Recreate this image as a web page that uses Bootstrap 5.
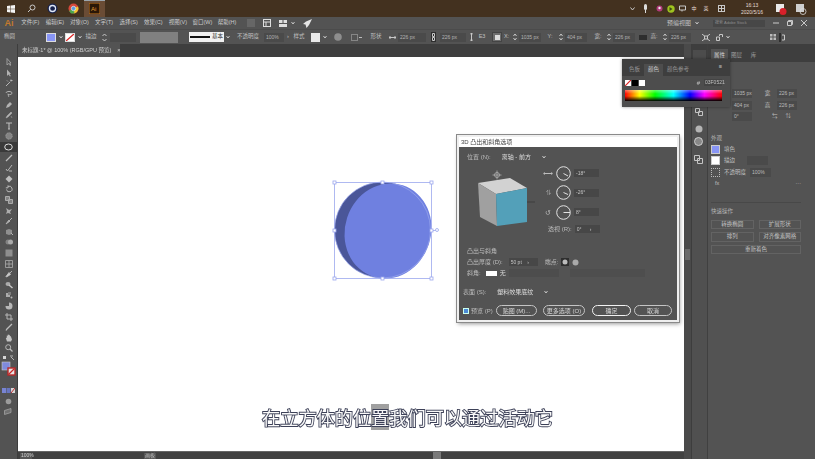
<!DOCTYPE html>
<html lang="zh-CN">
<head>
<meta charset="UTF-8">
<title>Illustrator 3D</title>
<link href="https://cdn.jsdelivr.net/npm/bootstrap@5.3.2/dist/css/bootstrap.min.css" rel="stylesheet">
<style>
html, body { margin: 0; background: #535353; overflow: hidden; }
body { font-family: "Liberation Sans", "Noto Sans CJK SC", sans-serif; font-size: 6px; line-height: 1; color: #c0c0c0; }
.app-root { width: 815px; height: 459px; position: relative; overflow: hidden; filter: blur(.4px); }
svg { display: block; flex: none; }
.taskbar { height: 17px; background: #43311f; }
.task-btn { width: 21px; height: 17px; }
.task-on { background: #6a4c35; box-shadow: inset 0 1px 0 #9aa5ae; }
.clock-box { width: 30px; font-size: 5px; line-height: 7px; color: #e3ded8; text-align: center; }
.menubar { height: 12px; background: #535353; }
.ai-mark { width: 18px; color: #c47a2c; font-size: 9px; font-weight: 700; text-align: center; }
.menu-item { width: 24.6px; text-align: center; color: #cbcbcb; font-size: 5.5px; white-space: nowrap; }
.search-box { width: 52px; height: 7px; background: #474747; margin-left: 14px; margin-right: 8px; color: #8d8d8d; font-size: 4px; padding: 1px 2px; }
.optbar { height: 15px; background: #535353; border-top: 1px solid #4b4b4b; }
.cell { flex: none; display: flex; align-items: center; justify-content: center; height: 13px; white-space: nowrap; font-size: 5.5px; }
.c4{width:4px}.c5{width:5px}.c6{width:6px}.c8{width:8px}.c9{width:9px}.c10{width:10px}.c11{width:11px}.c12{width:12px}.c14{width:14px}.c16{width:16px}.c18{width:18px}.c20{width:20px}.c21{width:21px}.c22{width:22px}.c26{width:26px}.c28{width:28px}.c32{width:32px}.c35{width:35px}.c38{width:38px}.c46{width:46px}
.c-fill { height: 9px; background: #8895f5; border: 1px solid #ddd; }
.c-stroke { height: 9px; background: #fff; border: 1px solid #ddd; }
.c-input { height: 9px; background: #4a4a4a; color: #b4b4b4; font-size: 5px; justify-content: flex-start; padding-left: 2px; }
.c-gray { height: 11px; background: #808080; }
.c-stk { height: 10px; background: #f0f0f0; color: #333; gap: 2px; }
.c-white { height: 9px; background: #e8e8e8; }
.c-sel { height: 10px; background: #6e6e6e; border: 1px solid #444; }
.chev { width: 4px; height: 4px; }
.work { height: 415px; }
.tool-col { width: 18px; background: #535353; border-right: 1px solid #3d3d3d; padding-top: 13px; }
.tool-ic { width: 17px; height: 10.6px; display: flex; align-items: center; justify-content: center; opacity: .85; }
.tool-ic.on { background: #3a3a3a; opacity: 1; }
.doc-col { width: 666px; }
.doc-tabs { height: 13px; background: #3e3e3e; }
.doc-tab { width: 102px; height: 13px; background: #535353; font-size: 5.5px; padding-left: 4px; gap: 6px; color: #d0d0d0; white-space: nowrap; }
.art-canvas { flex: 1 1 auto; background: #fff; position: relative; }
.art-svg { position: absolute; left: 0; top: 0; }
.status-row { height: 8px; background: #414141; border-top: 1px solid #666; color: #bbb; font-size: 5px; padding-left: 2px; }
.stat-zoom { width: 12px; height: 6px; background: #565656; padding: .5px 1px; color: #d0d0d0; }
.stat-mid { margin-left: 112px; width: 12px; height: 6px; background: #565656; padding: .5px 1px; }
.stat-thumb { margin-left: 277px; width: 8px; height: 7px; background: #7a7a7a; }
.scroll-col { width: 8px; background: #4a4a4a; padding: 205px 1px 0; border-right: 1px solid #3d3d3d; }
.scroll-thumb { height: 11px; background: #6a6a6a; }
.dock-col { width: 16px; background: #505050; border-right: 1px solid #404040; }
.dock-head { height: 18px; background: #3e3e3e; padding-top: 6px; margin-bottom: 46px; }
.dock-box { height: 12px; margin: 0 1px; background: #4c4c4c; }
.dock-ic { padding-right: 2px; }
.dh-17 { height: 17px; }
.dh-12 { height: 12px; }
.dh-18 { height: 18px; }
.prop-col { flex: 1 1 auto; background: #535353; }
.prop-tabs { height: 18px; background: #3e3e3e; padding-left: 3px; }
.prop-tab { width: 17px; height: 13px; font-size: 5.5px; display: flex; align-items: center; justify-content: center; color: #a0a0a0; }
.prop-tab.act { background: #535353; color: #d6d6d6; }
.prop-body { padding: 26px 14px 0 3px; font-size: 5.5px; }
.p-row { height: 11.5px; gap: 4px; white-space: nowrap; }
.p-field { height: 9px; background: #4a4a4a; color: #bcbcbc; font-size: 5px; display: flex; align-items: center; padding-left: 2px; white-space: nowrap; flex: none; }
.pf-20 { width: 20px; margin-left: 21px; }
.p-lab { width: 15px; text-align: center; margin: 0 -2px; }
.pf-op { margin-left: 0; }
.pf-st { margin-left: 8px; }
.p-head { margin-top: 12px; height: 9px; color: #b4b4b4; display: flex; align-items: center; }
.p-sw { width: 9px; height: 9px; border: 1px solid #ccc; flex: none; }
.sw-fill { background: #8895f5; }
.sw-none { background: #fff; }
.sw-dash { border: 1px dotted #bbb; }
.p-line { border-top: 1px solid #484848; margin: 12px 0 5px; }
.p-btn { height: 9.5px; border: 1px solid #636363; color: #c4c4c4; font-size: 5.5px; display: flex; align-items: center; justify-content: center; flex: 1 1 0; white-space: nowrap; }
.p-btns { gap: 5px; margin-top: 3px; }
.float-color { position: absolute; left: 622px; top: 59px; width: 108px; height: 48px; background: #4d4d4d; box-shadow: 0 0 3px rgba(0,0,0,.4); }
.fc-tabs { height: 17px; background: #3e3e3e; padding: 5px 0 0 3px; font-size: 5.5px; }
.fc-tab { height: 12px; padding: 0 4px; display: flex; align-items: center; color: #969696; white-space: nowrap; }
.fc-tab.act { background: #4d4d4d; color: #cfcfcf; }
.fc-row { height: 11px; padding: 0 8px 0 3px; margin-top: 1px; }
.fc-sq { width: 6px; height: 6px; margin-right: 1px; }
.sq-k { background: #000; }
.sq-w { background: #fff; }
.fc-hex { width: 18px; height: 7px; background: #444; font-size: 5px; padding: 1px; }
.fc-spec { height: 11px; margin: 2px 8px 0 3px; background: linear-gradient(180deg, rgba(255,255,255,.4), rgba(255,255,255,0) 35%, rgba(0,0,0,0) 55%, #000), linear-gradient(90deg, #f00, #ff0 15%, #0f0 31%, #0ff 50%, #00f 67%, #f0f 82%, #f00); }
.dlg-3d { position: absolute; left: 439px; top: 78px; width: 222px; height: 187px; background: #535353; border: 2px solid #efefef; box-shadow: 0 0 0 1px #8a8a8a, 1px 2px 4px rgba(0,0,0,.4); color: #bcbcbc; font-size: 6px; }
.dlg-title { height: 10px; background: #fff; color: #444; padding-left: 2px; font-size: 6px; }
.dlg-body { padding: 5px 0 0 4px; }
.d-row { height: 10px; white-space: nowrap; gap: 3px; }
.d-strong { color: #dcdcdc; }
.cube-area { width: 80px; height: 64px; }
.dial-col { padding-top: 1.5px; }
.dial-row { height: 19.5px; gap: 3px; }
.d-ic { width: 10px; text-align: center; font-size: 7px; }
.d-field { width: 25px; height: 8px; background: #474747; font-size: 5px; padding: 1.5px 2px; white-space: nowrap; color: #c4c4c4; flex: none; }
.d-thick { width: 29px; margin-left: 3px; }
.d-persp { margin-left: 85px; margin-top: -2px; }
.d-bevel { margin-top: 12px; }
.d-r1 { margin-top: 1px; }
.d-sec { margin-top: 9px; }
.d-foot { margin-top: 8px; }
.d-chk { width: 6px; height: 6px; background: #4b8ad6; border: 1px solid #cfe; flex: none; }
.d-chk-lab { width: 27px; padding-left: 2px; white-space: nowrap; }
.d-btn { height: 11px; border: 1px solid #c4c4c4; border-radius: 6px; display: flex; align-items: center; justify-content: center; font-size: 6px; color: #d6d6d6; flex: none; white-space: nowrap; }
.b-map { width: 41px; }
.b-more { width: 42px; margin-left: 6px; }
.b-ok { width: 39px; border-color: #f2f2f2; border-width: 1.5px; margin-left: 7px; }
.b-no { width: 38px; margin-left: 3px; }
.d-swatch { width: 11px; height: 5px; background: #fff; margin-left: 2px; }
.d-wide { width: 50px; height: 8px; background: #4d4d4d; margin-left: 0; }
.d-off { width: 75px; height: 8px; background: #4e4e4e; margin-left: 8px; color: #6c6c6c; }
.d-off-btns { margin-left: auto; }
.sub-line { position: absolute; left: 262px; top: 407px; width: 292px; font-family: "Noto Sans CJK SC", sans-serif; font-size: 18.2px; line-height: 21px; white-space: nowrap; color: #f9f9f9; -webkit-text-stroke: 1.8px #3d4158; paint-order: stroke fill; }
.sub-hi { background: #a0a0a0; }
.tic { fill: none; stroke: #c8c8c8; stroke-width: 1; }
</style>
</head>
<body>
<div class="app-root d-flex flex-column">

  <div class="taskbar d-flex align-items-center flex-shrink-0">
    <div class="task-btn d-flex align-items-center justify-content-center">
      <svg width="8" height="8" viewBox="0 0 8 8"><path fill="#f4f4f4" d="M0 1l3.500-.5V3.700H0zM4 .4L8 0v3.700H4zM0 4.200h3.500v3.300L0 7zM4 4.200h4V8l-4-.5z"/></svg>
    </div>
    <div class="task-btn d-flex align-items-center justify-content-center">
      <svg width="9" height="9" viewBox="0 0 9 9"><circle cx="5.500" cy="3.500" r="2.500" class="tic"/><path d="M3.700 5.300L1 8" class="tic"/></svg>
    </div>
    <div class="task-btn d-flex align-items-center justify-content-center">
      <svg width="11" height="11" viewBox="0 0 11 11"><circle cx="5.500" cy="5.500" r="5" fill="#17224d"/><circle cx="5.500" cy="5.500" r="3" fill="none" stroke="#dfe6f5" stroke-width="1.400"/><circle cx="6.500" cy="5.500" r="1.200" fill="#17224d"/></svg>
    </div>
    <div class="task-btn d-flex align-items-center justify-content-center">
      <svg width="11" height="11" viewBox="0 0 11 11"><circle cx="5.500" cy="5.500" r="5" fill="#d6483b"/><path d="M5.500 5.500L1 8 3 10.500 5.500 10.500 8 10z" fill="#4da84e"/><path d="M5.500 5.500L10 3.500 10.500 6 9 9 6.500 10.500z" fill="#f2c531"/><circle cx="5.500" cy="5.500" r="2.200" fill="#5a9bdc" stroke="#eee" stroke-width=".7"/></svg>
    </div>
    <div class="task-btn task-on d-flex align-items-center justify-content-center">
      <svg width="11" height="11" viewBox="0 0 11 11"><rect width="11" height="11" fill="#2a1707" stroke="#c87a20" stroke-width="1"/><text x="2" y="8" font-size="6" fill="#e39a2f" font-family="Liberation Sans">Ai</text></svg>
    </div>
    <div class="d-flex align-items-center ms-auto gap-1 pe-2">
      <svg width="5" height="4" viewBox="0 0 5 4"><path d="M.5.5l2 2.500 2-2.500" class="tic"/></svg>
      <svg class="ms-1" width="5" height="9" viewBox="0 0 5 9"><rect x="1" width="3" height="6" rx="1.500" fill="#ddd"/><path d="M2.500 6v3" stroke="#ddd"/></svg>
      <svg class="ms-1" width="7" height="7" viewBox="0 0 7 7"><circle cx="3.500" cy="3.500" r="3" fill="#b03a7a"/><circle cx="3.500" cy="3" r="1.200" fill="#eee"/></svg>
      <svg width="8" height="8" viewBox="0 0 8 8"><circle cx="4" cy="4" r="3.700" fill="#9fc31f"/><path d="M2.500 2l3 2-3 2z" fill="#3d4a12"/></svg>
      <svg width="7" height="7" viewBox="0 0 7 7"><path d="M.5 1h6v4h-6zM3 5v1.500" class="tic"/></svg>
      <span class="clock-box c8">中</span>
      <span class="clock-box c8">英</span>
      <svg class="ms-1" width="7" height="7" viewBox="0 0 7 7"><rect x=".5" y=".5" width="6" height="6" class="tic"/><path d="M.5 3.500h6M3.500.5v6" class="tic"/></svg>
      <div class="clock-box ms-2">16:13<br>2020/5/16</div>
      <svg class="ms-1" width="12" height="12" viewBox="0 0 12 12"><rect x="1" y="1" width="8" height="8" fill="#e9e9e9"/><circle cx="8" cy="8.500" r="3.500" fill="#d8202a"/></svg>
      <svg class="ms-1" width="12" height="12" viewBox="0 0 12 12"><rect x="1" y="1" width="8" height="8" fill="#cfcfcf"/><circle cx="8" cy="8.500" r="3" fill="none" stroke="#ddd" stroke-width=".8"/></svg>
    </div>
  </div>

  <div class="menubar d-flex align-items-center flex-shrink-0">
    <span class="ai-mark">Ai</span>
    <span class="menu-item">文件(F)</span>
    <span class="menu-item">编辑(E)</span>
    <span class="menu-item">对象(O)</span>
    <span class="menu-item">文字(T)</span>
    <span class="menu-item">选择(S)</span>
    <span class="menu-item">效果(C)</span>
    <span class="menu-item">视图(V)</span>
    <span class="menu-item">窗口(W)</span>
    <span class="menu-item">帮助(H)</span>
    <svg class="ms-2" width="8" height="8" viewBox="0 0 8 8"><rect width="8" height="8" fill="#666"/></svg>
    <svg class="ms-2" width="8" height="8" viewBox="0 0 8 8"><rect x=".5" y=".5" width="7" height="7" fill="none" stroke="#ddd"/><path d="M.5 3h7M3 3v4.500" stroke="#ddd"/></svg>
    <svg class="ms-2" width="8" height="7" viewBox="0 0 8 7"><path d="M0 0h3.500v3H0zM4.500 0H8v3H4.500zM0 4h8v3H0z" fill="#ddd"/></svg>
    <svg class="ms-1" width="4" height="4" viewBox="0 0 4 4"><path d="M.5 1l1.500 2 1.500-2" class="tic"/></svg>
    <svg class="ms-2" width="9" height="9" viewBox="0 0 9 9"><path d="M9 0L3 2.500 0 5l2.500.5L3.500 9 6 6z" fill="#e4e4e4"/></svg>
    <span class="ms-auto">预编视图</span>
    <svg class="ms-1" width="4" height="4" viewBox="0 0 4 4"><path d="M.5 1l1.500 2 1.500-2" class="tic"/></svg>
    <div class="search-box d-flex align-items-center">搜索 Adobe Stock</div>
    <svg width="6" height="2" viewBox="0 0 6 2"><path d="M0 1h6" stroke="#ccc"/></svg>
    <svg class="ms-2" width="6" height="6" viewBox="0 0 6 6"><path d="M.5 1.500h4v4h-4zM1.500 1.500V.5h4v4h-1" class="tic"/></svg>
    <svg class="ms-2 me-2" width="6" height="6" viewBox="0 0 6 6"><path d="M0 0l6 6M6 0L0 6" class="tic"/></svg>
  </div>

  <div class="optbar d-flex align-items-center flex-shrink-0">
    <div class="cell c46 justify-content-start ps-1">椭圆</div>
    <div class="cell c10 c-fill"></div>
    <div class="cell c9"><svg class="chev" viewBox="0 0 4 4"><path d="M.5 1l1.500 2 1.500-2" class="tic"/></svg></div>
    <div class="cell c10 c-stroke"><svg width="8" height="7" viewBox="0 0 8 7"><path d="M0 7L8 0" stroke="#d22" stroke-width="1.300"/></svg></div>
    <div class="cell c9"><svg class="chev" viewBox="0 0 4 4"><path d="M.5 1l1.500 2 1.500-2" class="tic"/></svg></div>
    <div class="cell c14">描边</div>
    <div class="cell c12"><svg width="5" height="9" viewBox="0 0 5 9"><path d="M.5 3l2-2 2 2M.5 6l2 2 2-2" class="tic"/></svg></div>
    <div class="cell c26 c-input"></div>
    <div class="cell c4"></div>
    <div class="cell c38 c-gray"></div>
    <div class="cell c11"></div>
    <div class="cell c35 c-stk"><svg width="20" height="2" viewBox="0 0 20 2"><rect width="20" height="2" fill="#111"/></svg>基本</div>
    <div class="cell c8"><svg class="chev" viewBox="0 0 4 4"><path d="M.5 1l1.500 2 1.500-2" class="tic"/></svg></div>
    <div class="cell c32">不透明度</div>
    <div class="cell c20 c-input">100%</div>
    <div class="cell c8">›</div>
    <div class="cell c14">样式</div>
    <div class="cell c5"></div>
    <div class="cell c9 c-white"></div>
    <div class="cell c10"><svg class="chev" viewBox="0 0 4 4"><path d="M.5 1l1.500 2 1.500-2" class="tic"/></svg></div>
    <div class="cell c16"><svg width="8" height="8" viewBox="0 0 8 8"><circle cx="4" cy="4" r="3.800" fill="#8e8e8e"/></svg></div>
    <div class="cell c20"><svg width="11" height="7" viewBox="0 0 11 7"><path d="M.5.5h6v6h-6z" fill="none" stroke="#bbb" stroke-dasharray="1 1"/><path d="M8 3.500h3" stroke="#bbb"/></svg></div>
    <div class="cell c20">形状</div>
    <div class="cell c12"><svg width="7" height="5" viewBox="0 0 7 5"><path d="M0 2.500h7M1.500 1L0 2.500 1.500 4M5.500 1L7 2.500 5.500 4" class="tic"/></svg></div>
    <div class="cell c28 c-input">226 px</div>
    <div class="cell c14"><svg width="5" height="10" viewBox="0 0 5 10"><rect width="5" height="10" fill="#2e2e2e"/><path d="M1.500 1.500h2v3h-2zM1.500 5.500h2v3h-2z" class="tic"/></svg></div>
    <div class="cell c26 c-input">226 px</div>
    <div class="cell c10"><svg width="3" height="8" viewBox="0 0 3 8"><path d="M1.500 0v8M0 1.500L1.500 0 3 1.500M0 6.500L1.500 8 3 6.500" class="tic"/></svg></div>
    <div class="cell c12">E3</div>
    <div class="cell c4"></div>
    <div class="cell c10 c-sel"><svg width="5" height="5" viewBox="0 0 5 5"><rect width="5" height="5" fill="#ddd"/></svg></div>
    <div class="cell c9">X:</div>
    <div class="cell c8"><svg width="4" height="8" viewBox="0 0 4 8"><path d="M.5 3l1.500-2 1.500 2M.5 5l1.500 2 1.500-2" class="tic"/></svg></div>
    <div class="cell c22 c-input">1035 px</div>
    <div class="cell c6"></div>
    <div class="cell c6">Y:</div>
    <div class="cell c4"></div>
    <div class="cell c8"><svg width="4" height="8" viewBox="0 0 4 8"><path d="M.5 3l1.500-2 1.500 2M.5 5l1.500 2 1.500-2" class="tic"/></svg></div>
    <div class="cell c22 c-input">404 px</div>
    <div class="cell c8"></div>
    <div class="cell c6">宽:</div>
    <div class="cell c4"></div>
    <div class="cell c8"><svg width="4" height="8" viewBox="0 0 4 8"><path d="M.5 3l1.500-2 1.500 2M.5 5l1.500 2 1.500-2" class="tic"/></svg></div>
    <div class="cell c22 c-input">226 px</div>
    <div class="cell c4"></div>
    <div class="cell c8"><svg width="8" height="5" viewBox="0 0 8 5"><rect width="8" height="5" fill="#2e2e2e"/></svg></div>
    <div class="cell c4"></div>
    <div class="cell c6">高:</div>
    <div class="cell c4"></div>
    <div class="cell c8"><svg width="4" height="8" viewBox="0 0 4 8"><path d="M.5 3l1.500-2 1.500 2M.5 5l1.500 2 1.500-2" class="tic"/></svg></div>
    <div class="cell c22 c-input">226 px</div>
    <div class="cell c8"></div>
    <div class="cell c14"><svg width="8" height="7" viewBox="0 0 8 7"><path d="M0 0l2.500 2M8 0L5.500 2M0 7l2.500-2M8 7L5.500 5" class="tic"/><rect x="2.500" y="2" width="3" height="3" class="tic"/></svg></div>
    <div class="cell c12"><svg width="7" height="7" viewBox="0 0 7 7"><path d="M.5 3h3v3.500h-3zM3.500 2V.5h3V3" class="tic"/></svg></div>
    <div class="cell c6"><svg class="chev" viewBox="0 0 4 4"><path d="M.5 1l1.500 2 1.500-2" class="tic"/></svg></div>
    <div class="cell c38"></div>
    <div class="cell c8"><svg width="6" height="6" viewBox="0 0 6 6"><path d="M0 0h2.500v2.500H0zM3.500 0H6v2.500H3.500zM0 3.500h2.500V6H0zM3.500 3.500H6V6H3.500z" fill="#bbb"/></svg></div>
    <div class="cell c10"><svg width="6" height="9" viewBox="0 0 6 9"><rect width="2" height="9" fill="#2e2e2e"/><path d="M3 2h2.500v5H3" class="tic"/></svg></div>
  </div>

  <div class="work d-flex flex-grow-1">
    <div class="tool-col flex-shrink-0">
      <div class="tool-ic"><svg width="8" height="8" viewBox="0 0 8 8"><path d="M2 .5v6.500l1.500-1.500L5 7.500l.8-.5-1.200-2H6z" fill="none" stroke="#aaa"/></svg></div>
      <div class="tool-ic"><svg width="8" height="8" viewBox="0 0 8 8"><path d="M2 .5v6.500l1.500-1.500L5 7.500l.8-.5-1.200-2H6z" fill="#c4c4c4"/></svg></div>
      <div class="tool-ic"><svg width="8" height="8" viewBox="0 0 8 8"><path d="M1 7l4-4M6 .5v2M7.500 1.500h-2M2 1.500l1 1" class="tic"/></svg></div>
      <div class="tool-ic"><svg width="8" height="8" viewBox="0 0 8 8"><path d="M1 3c0-2 6-2 6 0s-4 2-4 1 .5 3 1 3" class="tic"/></svg></div>
      <div class="tool-ic"><svg width="8" height="8" viewBox="0 0 8 8"><path d="M1 7l1-3 3-3 2 2-3 3z" fill="#c4c4c4"/></svg></div>
      <div class="tool-ic"><svg width="8" height="8" viewBox="0 0 8 8"><path d="M1 7l1-2 4-4 1 1-4 4zM6 5l1 2" fill="#c4c4c4" stroke="#c4c4c4" stroke-width=".5"/></svg></div>
      <div class="tool-ic"><svg width="8" height="8" viewBox="0 0 8 8"><path d="M1 1h6M4 1v6M3 7h2" stroke="#d0d0d0" stroke-width="1.100"/></svg></div>
      <div class="tool-ic"><svg width="8" height="8" viewBox="0 0 8 8"><circle cx="4" cy="4" r="3.200" fill="#8c8c8c" stroke="#aaa" stroke-dasharray="1 .6"/></svg></div>
      <div class="tool-ic on"><svg width="9" height="8" viewBox="0 0 9 8"><ellipse cx="4.500" cy="4" rx="3.800" ry="3" fill="none" stroke="#ddd"/></svg></div>
      <div class="tool-ic"><svg width="8" height="8" viewBox="0 0 8 8"><path d="M1 7L7 1" stroke="#d0d0d0" stroke-width="1.300"/></svg></div>
      <div class="tool-ic"><svg width="8" height="8" viewBox="0 0 8 8"><path d="M1 5l1.500 2L7 1" class="tic"/><path d="M4 7h3" class="tic"/></svg></div>
      <div class="tool-ic"><svg width="8" height="8" viewBox="0 0 8 8"><path d="M4 .5L7.500 4 4 7.500.5 4z" fill="#d0d0d0"/></svg></div>
      <div class="tool-ic"><svg width="8" height="8" viewBox="0 0 8 8"><path d="M1.500 4.500A2.800 2.800 0 1 0 3 1.500M3 .3v2.500H.8" class="tic"/></svg></div>
      <div class="tool-ic"><svg width="8" height="8" viewBox="0 0 8 8"><path d="M.5.5h4v4h-4zM3.500 3.500h4v4h-4z" fill="#8c8c8c" stroke="#bbb"/></svg></div>
      <div class="tool-ic"><svg width="8" height="8" viewBox="0 0 8 8"><path d="M1 1l3 2 3-1-2 3 1 2-3-1-2 1 1-3z" fill="#bdbdbd"/></svg></div>
      <div class="tool-ic"><svg width="8" height="8" viewBox="0 0 8 8"><path d="M7 1L4 4M1 7l3-4 1 1z" fill="#c4c4c4" stroke="#c4c4c4"/></svg></div>
      <div class="tool-ic"><svg width="8" height="8" viewBox="0 0 8 8"><path d="M1 2l3-1 3 1v4L4 7 1 6z" fill="#9a9a9a"/><path d="M6 5l2 2" class="tic"/></svg></div>
      <div class="tool-ic"><svg width="8" height="8" viewBox="0 0 8 8"><circle cx="3" cy="4" r="2.500" fill="#8c8c8c"/><circle cx="5.500" cy="4" r="2.500" fill="#bbb"/></svg></div>
      <div class="tool-ic"><svg width="8" height="8" viewBox="0 0 8 8"><rect x=".5" y=".5" width="7" height="7" fill="#999"/></svg></div>
      <div class="tool-ic"><svg width="8" height="8" viewBox="0 0 8 8"><path d="M.5.5h7v7h-7zM.5 4h7M4 .5v7" stroke="#bbb" fill="none" stroke-width=".8"/></svg></div>
      <div class="tool-ic"><svg width="8" height="8" viewBox="0 0 8 8"><path d="M7 1L4.500 3.500M5.500 4.500L1.500 7 1 6.500l3-4z" fill="#ddd" stroke="#ddd" stroke-width=".8"/></svg></div>
      <div class="tool-ic"><svg width="8" height="8" viewBox="0 0 8 8"><ellipse cx="3" cy="3" rx="2.500" ry="2" fill="#bbb"/><path d="M4 4l3.500 3" stroke="#ddd" stroke-width="1.500"/></svg></div>
      <div class="tool-ic"><svg width="8" height="8" viewBox="0 0 8 8"><rect x="1" y="2" width="4" height="4" fill="#bbb"/><rect x="3" y="1" width="3" height="3" fill="#888"/><circle cx="6.500" cy="6.500" r="1" fill="#ccc"/></svg></div>
      <div class="tool-ic"><svg width="8" height="8" viewBox="0 0 8 8"><path d="M4 4V.5A3.500 3.500 0 1 1 .5 4z" fill="#c9c9c9"/></svg></div>
      <div class="tool-ic"><svg width="8" height="8" viewBox="0 0 8 8"><path d="M2 0v6h6M0 2h6v6" class="tic"/></svg></div>
      <div class="tool-ic"><svg width="8" height="8" viewBox="0 0 8 8"><path d="M7 1L2 6 1 7.500" stroke="#d0d0d0" stroke-width="1.300"/></svg></div>
      <div class="tool-ic"><svg width="8" height="8" viewBox="0 0 8 8"><path d="M2 7.500L.8 4l1-.2V1.500l1 .3V.6l1 .2 1 .2v1l1 .2L7 5.500 6 7.500z" fill="#d6d6d6"/></svg></div>
      <div class="tool-ic"><svg width="8" height="8" viewBox="0 0 8 8"><circle cx="3.200" cy="3.200" r="2.500" class="tic"/><path d="M5 5l2.500 2.500" stroke="#d0d0d0" stroke-width="1.300"/></svg></div>
      <div class="tool-ic"><svg width="12" height="7" viewBox="0 0 12 7"><rect y="1" width="3" height="3" fill="#eee"/><path d="M8 2l3 3" class="tic"/><path d="M7 1h3" class="tic"/></svg></div>
      <div class="tool-ic"><svg width="15" height="15" viewBox="0 0 15 15" overflow="visible"><rect x="1" y="0" width="8" height="8" fill="#8895f5" stroke="#ddd" stroke-width=".6"/><rect x="7" y="6" width="7" height="7" fill="#fff" stroke="#c22" stroke-width="1.400"/><path d="M7.500 12.500l6-6" stroke="#d22" stroke-width="1.200"/></svg></div>
      <div class="tool-ic"></div>
      <div class="tool-ic"><svg width="13" height="5" viewBox="0 0 13 5"><rect width="4" height="5" fill="#7f8eea"/><rect x="4.500" width="4" height="5" fill="#6c7cd4"/><rect x="9" width="4" height="5" fill="#eee"/><path d="M9 5l4-5" stroke="#c22"/></svg></div>
      <div class="tool-ic"><svg width="7" height="7" viewBox="0 0 7 7"><circle cx="3.500" cy="3.500" r="2.800" fill="#aaa"/></svg></div>
      <div class="tool-ic"><svg width="9" height="7" viewBox="0 0 9 7"><path d="M.5 2.500L7 .5v4L.5 6.500z" fill="#777" stroke="#bbb" stroke-width=".7"/></svg></div>
    </div>

    <div class="doc-col d-flex flex-column flex-shrink-0">
      <div class="doc-tabs d-flex flex-shrink-0">
        <div class="doc-tab d-flex align-items-center">未标题-1* @ 100% (RGB/GPU 预览)<span>×</span></div>
      </div>
      <div class="art-canvas">
        <svg class="art-svg" width="666" height="394" viewBox="18 57 666 394">
          <circle cx="382.500" cy="230" r="48" fill="#4a5699"/>
          <ellipse cx="388" cy="231" rx="43" ry="48" fill="#6f80e0" transform="rotate(18 388 231)"/>
          <circle cx="382.500" cy="230" r="48" fill="none" stroke="#9ba7ee" stroke-width=".7"/>
          <g fill="#fff" stroke="#9ba7ee" stroke-width=".8">
            <path d="M334.500 182.500h97v96h-97z" fill="none"/>
            <path d="M431.500 230.500h5" fill="none"/>
            <rect x="333" y="181" width="3" height="3"/>
            <rect x="381" y="181" width="3" height="3"/>
            <rect x="430" y="181" width="3" height="3"/>
            <rect x="333" y="229" width="3" height="3"/>
            <rect x="430" y="229" width="3" height="3"/>
            <rect x="333" y="277" width="3" height="3"/>
            <rect x="381" y="277" width="3" height="3"/>
            <rect x="430" y="277" width="3" height="3"/>
            <circle cx="437" cy="230" r="1.500"/>
          </g>
        </svg>
        <div class="dlg-3d">
          <div class="dlg-title d-flex align-items-center">3D 凸出和斜角选项</div>
          <div class="dlg-body">
            <div class="d-row d-flex align-items-center ms-1">位置 (N):<span class="d-strong ms-2">离轴 - 前方</span><svg class="chev ms-2" viewBox="0 0 4 4"><path d="M.5 1l1.500 2 1.500-2" class="tic"/></svg></div>
            <div class="d-flex">
              <div class="cube-area">
                <svg width="80" height="64" viewBox="0 0 80 64" overflow="visible">
                  <circle cx="34" cy="13" r="2.500" fill="none" stroke="#bbb" stroke-width=".7"/>
                  <path d="M34 8.500v9M29.500 13h9" stroke="#bbb" stroke-width=".7"/>
                  <path d="M15 21l32-5 17 10-31 6z" fill="#d2d2d2"/>
                  <path d="M15 21l18 11 1 32-17-9z" fill="#a0a0a0"/>
                  <path d="M33 32l31-6v34l-30 4z" fill="#53a0b9"/>
                  <path d="M64 40h8" stroke="#3f3f3f"/>
                </svg>
              </div>
              <div class="dial-col">
                <div class="dial-row d-flex align-items-center"><span class="d-ic">⟷</span><svg width="15" height="15" viewBox="0 0 15 15"><circle cx="7.500" cy="7.500" r="6.800" fill="none" stroke="#e2e2e2"/><path d="M7.500 7.500L12 10" stroke="#e2e2e2"/></svg><div class="d-field">-18°</div></div>
                <div class="dial-row d-flex align-items-center"><span class="d-ic">⥮</span><svg width="15" height="15" viewBox="0 0 15 15"><circle cx="7.500" cy="7.500" r="6.800" fill="none" stroke="#e2e2e2"/><path d="M7.500 7.500L12 9.500" stroke="#e2e2e2"/></svg><div class="d-field">-26°</div></div>
                <div class="dial-row d-flex align-items-center"><span class="d-ic">↺</span><svg width="15" height="15" viewBox="0 0 15 15"><circle cx="7.500" cy="7.500" r="6.800" fill="none" stroke="#e2e2e2"/><path d="M7.500 7.500H14" stroke="#e2e2e2"/></svg><div class="d-field">8°</div></div>
              </div>
            </div>
            <div class="d-row d-persp d-flex align-items-center">透视 (R):<span class="d-field">0° &nbsp; &nbsp; &nbsp;›</span></div>
            <div class="d-row d-bevel d-flex align-items-center ms-1">凸出与斜角</div>
            <div class="d-row d-r1 d-flex align-items-center ms-1">凸出厚度 (D):<span class="d-field d-thick">50 pt &nbsp; &nbsp;›</span><span class="ms-1">端点:</span>
              <svg width="8" height="8" viewBox="0 0 8 8"><rect width="8" height="8" fill="#2e2e2e"/><circle cx="4" cy="4" r="2.500" fill="#bbb"/></svg>
              <svg width="7" height="7" viewBox="0 0 7 7"><circle cx="3.500" cy="3.500" r="3" fill="#aaa"/></svg>
            </div>
            <div class="d-row d-r1 d-flex align-items-center ms-1">斜角:<span class="d-swatch"></span><span class="d-strong">无</span><span class="d-wide"></span><span class="d-off"></span></div>
            <div class="d-row d-sec d-flex align-items-center">表面 (S):<span class="d-strong ms-2">塑料效果底纹</span><svg class="chev ms-2" viewBox="0 0 4 4"><path d="M.5 1l1.500 2 1.500-2" class="tic"/></svg></div>
            <div class="d-foot d-flex align-items-center">
              <span class="d-chk"></span><span class="d-chk-lab">预览 (P)</span>
              <span class="d-btn b-map">贴图 (M)...</span>
              <span class="d-btn b-more">更多选项 (O)</span>
              <span class="d-btn b-ok">确定</span>
              <span class="d-btn b-no">取消</span>
            </div>
          </div>
        </div>
      </div>
      <div class="status-row d-flex align-items-center flex-shrink-0">
        <span class="stat-zoom">100%</span>
        <span class="stat-mid">画板</span>
        <span class="stat-thumb"></span>
      </div>
    </div>

    <div class="scroll-col flex-shrink-0"><div class="scroll-thumb"></div></div>
    <div class="dock-col flex-shrink-0">
      <div class="dock-head"><div class="dock-box"></div></div>
      <div class="dock-ic dh-17 d-flex justify-content-center"><svg width="8" height="8" viewBox="0 0 8 8"><path d="M.5.5h4v4h-4zM3.500 3.500h4v4h-4z" fill="none" stroke="#c4c4c4"/></svg></div>
      <div class="dock-ic dh-12 d-flex justify-content-center"><svg width="8" height="8" viewBox="0 0 8 8"><circle cx="4" cy="4" r="3.500" fill="#b4b4b4"/></svg></div>
      <div class="dock-ic dh-18 d-flex justify-content-center"><svg width="9" height="9" viewBox="0 0 9 9"><circle cx="4.500" cy="4.500" r="4" fill="#888" stroke="#ccc"/></svg></div>
      <div class="dock-ic d-flex justify-content-center"><svg width="9" height="9" viewBox="0 0 9 9"><path d="M.5.5h5v5h-5zM3.500 3.500h5v5h-5z" fill="none" stroke="#c4c4c4"/></svg></div>
    </div>

    <div class="prop-col">
      <div class="prop-tabs d-flex align-items-end">
        <div class="prop-tab act">属性</div>
        <div class="prop-tab">图层</div>
        <div class="prop-tab">库</div>
      </div>
      <div class="prop-body">
        <div class="p-row d-flex align-items-center"><span class="p-field pf-20">1035 px</span><span class="p-lab ms-1">宽</span><span class="p-field c20">226 px</span></div>
        <div class="p-row d-flex align-items-center"><span class="p-field pf-20">404 px</span><span class="p-lab ms-1">高</span><span class="p-field c20">226 px</span></div>
        <div class="p-row d-flex align-items-center"><span class="p-field pf-20">0°</span><span class="ms-3">⇆</span><span class="ms-1">⇅</span></div>
        <div class="p-head">外观</div>
        <div class="p-row d-flex align-items-center"><span class="p-sw sw-fill"></span><span>填色</span></div>
        <div class="p-row d-flex align-items-center"><span class="p-sw sw-none"></span><span>描边</span><span class="p-field c21 pf-st"></span></div>
        <div class="p-row d-flex align-items-center"><span class="p-sw sw-dash"></span><span>不透明度</span><span class="p-field c21 pf-op">100%</span></div>
        <div class="p-row d-flex align-items-center"><span class="ms-1">fx</span><span class="ms-auto">···</span></div>
        <div class="p-line"></div>
        <div class="p-head mt-0">快速操作</div>
        <div class="p-btns d-flex"><div class="p-btn">转换椭圆</div><div class="p-btn">扩展形状</div></div>
        <div class="p-btns d-flex"><div class="p-btn">排列</div><div class="p-btn">对齐像素网格</div></div>
        <div class="p-btns d-flex"><div class="p-btn">重新着色</div></div>
      </div>
    </div>
  </div>

  <div class="float-color">
    <div class="fc-tabs d-flex">
      <div class="fc-tab">色板</div>
      <div class="fc-tab act">颜色</div>
      <div class="fc-tab">颜色参考</div>
      <span class="ms-auto pe-2">≡</span>
    </div>
    <div class="fc-row d-flex align-items-center">
      <svg class="fc-sq" viewBox="0 0 6 6"><rect width="6" height="6" fill="#fff"/><path d="M0 6l6-6" stroke="#d22" stroke-width="1.200"/></svg>
      <span class="fc-sq sq-k"></span><span class="fc-sq sq-w"></span>
      <span class="ms-auto me-1">#</span><span class="fc-hex">03F0521</span>
    </div>
    <div class="fc-spec"></div>
  </div>

  <div class="sub-line">在立方体的位<span class="sub-hi">置</span>我们可以通过活动它</div>
</div>
<script src="https://cdn.jsdelivr.net/npm/bootstrap@5.3.2/dist/js/bootstrap.bundle.min.js"></script>
</body>
</html>
